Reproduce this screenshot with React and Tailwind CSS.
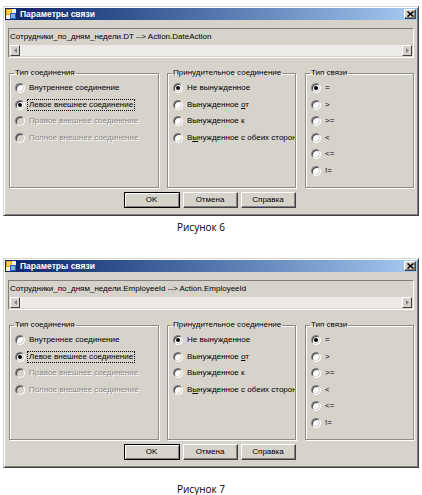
import React from "react";

function Radio({ checked, disabled }) {
  return (
    <span
      className={`flex h-[10px] w-[10px] shrink-0 items-center justify-center rounded-full border border-[#808080] border-b-white border-r-white shadow-[inset_1px_1px_0_#404040,inset_-1px_-1px_0_#d4d0c8] ${
        disabled ? "bg-[#d6d3cb]" : "bg-white"
      }`}
    >
      {checked && <span className="h-[4px] w-[4px] rounded-full bg-black" />}
    </span>
  );
}

function Row({ children, checked, disabled, focus }) {
  return (
    <div className="flex h-[16.5px] items-center gap-[2px] overflow-hidden whitespace-nowrap pl-[5px]">
      <Radio checked={checked} disabled={disabled} />
      <span
        className={`px-[1px] leading-[10px] ${
          focus ? "border border-dotted border-black" : "border border-transparent"
        } ${disabled ? "text-[#8a8883] [text-shadow:1px_1px_0_#fff]" : "text-black"}`}
      >
        {children}
      </span>
    </div>
  );
}

function Group({ title, width, children }) {
  return (
    <fieldset
      className={`m-0 h-[120px] min-w-0 shrink-0 overflow-hidden border border-[#8f8c86] p-0 pt-[2px] shadow-[inset_1px_1px_0_#fff,1px_1px_0_#fff] ${width}`}
    >
      <legend className="ml-[4px] px-[1px] leading-[10px] text-black">{title}</legend>
      {children}
    </fieldset>
  );
}

function Button({ children, def }) {
  return (
    <div
      className={`flex h-[16px] items-center justify-center border text-black ${
        def
          ? "w-[56px] border-black shadow-[inset_1px_1px_0_#fff,inset_-1px_-1px_0_#808080]"
          : "w-[55px] border-white border-b-[#404040] border-r-[#404040] shadow-[inset_-1px_-1px_0_#808080]"
      }`}
    >
      {children}
    </div>
  );
}

function TitleIcon() {
  return (
    <svg width="10" height="10" viewBox="0 0 10 10" className="shrink-0">
      <rect x="0" y="0" width="10" height="10" fill="#f4f0e0" />
      <rect x="0" y="0" width="6" height="6" fill="#f0a020" />
      <rect x="1" y="1" width="4" height="4" fill="#ffd84a" />
      <rect x="4" y="4" width="6" height="6" fill="#2c5cc8" />
      <rect x="5" y="5" width="4" height="4" fill="#7fb0f0" />
    </svg>
  );
}

function Dialog({ path }) {
  return (
    <div className="ml-[3px] w-[416px] border border-[#d6d3cb] border-b-[#404040] border-r-[#404040] bg-[#d6d3cb] shadow-[inset_1px_1px_0_#fff,inset_-1px_-1px_0_#808080]">
      <div className="mx-[1px] mt-[1px] flex h-[12px] items-center bg-gradient-to-r from-[#0a246a] to-[#a6caf0] pl-[1px] pr-[1px]">
        <TitleIcon />
        <span className="ml-[4px] text-[8.5px] font-bold leading-[12px] text-white">Параметры связи</span>
        <div className="ml-auto flex h-[10px] w-[12px] items-center justify-center border border-white border-b-[#404040] border-r-[#404040] bg-[#d6d3cb] shadow-[inset_-1px_-1px_0_#808080]">
          <svg width="7" height="6" viewBox="0 0 7 6">
            <path d="M0.5 0.5 L6.5 5.5 M6.5 0.5 L0.5 5.5" stroke="#000" strokeWidth="1.6" />
          </svg>
        </div>
      </div>
      <div className="px-[4px] pb-[7px]">
        <div className="mt-[8px] flex h-[30px] flex-col border border-[#808080] border-b-white border-r-white">
          <div className="flex h-[16px] items-center overflow-hidden whitespace-nowrap pl-[1px] text-black">{path}</div>
          <div className="mx-[1px] flex h-[11px] bg-[#ecebe7]">
            <div className="flex h-[11px] w-[10px] items-center justify-center border border-white border-b-[#404040] border-r-[#404040] bg-[#d6d3cb]">
              <svg width="3" height="5" viewBox="0 0 3 5">
                <path d="M3 0 L0 2.5 L3 5 Z" fill="#808080" />
              </svg>
            </div>
            <div className="flex-1" />
            <div className="flex h-[11px] w-[10px] items-center justify-center border border-white border-b-[#404040] border-r-[#404040] bg-[#d6d3cb]">
              <svg width="3" height="5" viewBox="0 0 3 5">
                <path d="M0 0 L3 2.5 L0 5 Z" fill="#808080" />
              </svg>
            </div>
          </div>
        </div>
        <div className="ml-[1px] mt-[10px] flex">
          <Group title="Тип соединения" width="w-[150px]">
            <Row>Внутреннее соединение</Row>
            <Row checked focus>Левое внешнее соединение</Row>
            <Row disabled>Правое внешнее соединение</Row>
            <Row disabled>Полное внешнее соединение</Row>
          </Group>
          <div className="w-[8px] shrink-0" />
          <Group title="Принудительное соединение" width="w-[129px]">
            <Row checked>Не вынужденное</Row>
            <Row>
              Вынужденное <span className="underline">о</span>т
            </Row>
            <Row>Вынужденное к</Row>
            <Row>
              В<span className="underline">ы</span>нужденное с обеих сторон
            </Row>
          </Group>
          <div className="w-[9px] shrink-0" />
          <Group title="Тип связи" width="w-[109px]">
            <Row checked>=</Row>
            <Row>&gt;</Row>
            <Row>&gt;=</Row>
            <Row>&lt;</Row>
            <Row>&lt;=</Row>
            <Row>!=</Row>
          </Group>
        </div>
        <div className="mt-[4px] flex justify-center gap-[3px] pr-[3px]">
          <Button def>OK</Button>
          <Button>Отмена</Button>
          <Button>Справка</Button>
        </div>
      </div>
    </div>
  );
}

function Caption({ children }) {
  return (
    <div className="flex justify-center pr-[20px] font-['Open_Sans',sans-serif] text-[10px] leading-[14px] text-black">
      {children}
    </div>
  );
}

export default function App() {
  return (
    <div className="h-[495px] w-[422px] overflow-hidden bg-white pt-[6px] font-['Liberation_Sans',Arial,sans-serif] text-[8px] leading-[10px]">
      <Dialog path="Сотрудники_по_дням_недели.DT --> Action.DateAction" />
      <div className="mt-[4px]">
        <Caption>Рисунок 6</Caption>
      </div>
      <div className="mt-[24px]">
        <Dialog path="Сотрудники_по_дням_недели.EmployeeId --> Action.EmployeeId" />
      </div>
      <div className="mt-[14px]">
        <Caption>Рисунок 7</Caption>
      </div>
    </div>
  );
}
